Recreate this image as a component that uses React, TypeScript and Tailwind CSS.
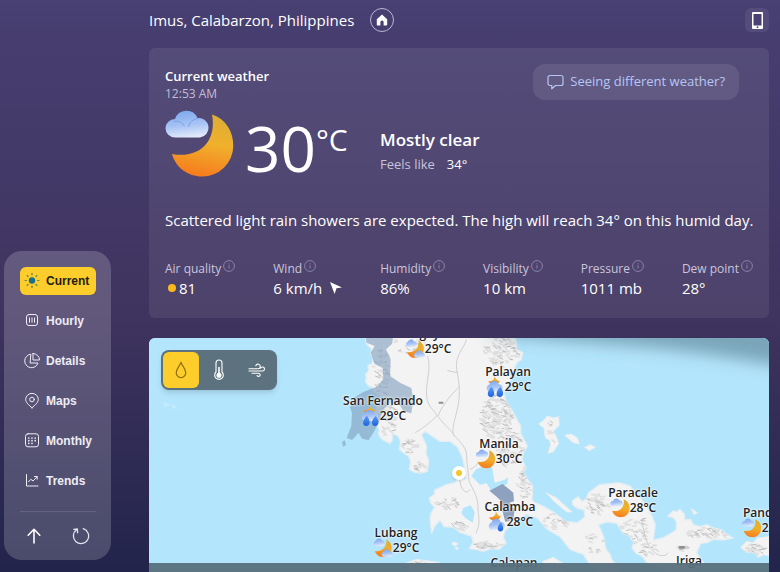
import React, { useId } from "react";

type IconProps = { className?: string };

/* ---------- navigation icons ---------- */

function SunIcon() {
  const rays = [0, 45, 90, 135, 180, 225, 270, 315];
  return (
    <svg viewBox="0 0 16 16" className="size-4" aria-hidden="true">
      <circle cx="8" cy="7.5" r="3.2" fill="#14708c" />
      {rays.map((a) => (
        <path key={a} d="M8 .6v1.2" stroke="#5f7a4c" strokeWidth="1.2" strokeLinecap="round" transform={`rotate(${a} 8 7.5)`} />
      ))}
    </svg>
  );
}

function LineIcon({ children }: { children: React.ReactNode }) {
  return (
    <svg viewBox="0 0 16 16" className="size-4" fill="none" stroke="currentColor" strokeLinecap="round" strokeLinejoin="round" aria-hidden="true">
      {children}
    </svg>
  );
}

const HourlyIcon = () => (
  <LineIcon>
    <rect x="2.5" y="1.5" width="11" height="11" rx="2.5" />
    <path d="M5.5 5v4.2M8 5v4.2M10.5 5v4.2" />
  </LineIcon>
);
const DetailsIcon = () => (
  <LineIcon>
    <path d="M6.5 1.2A6.800 6.800 0 1 0 14 10H6.500z" />
    <path d="M9 .5v6.500h6.500A6.500 6.500 0 0 0 9 .5z" />
  </LineIcon>
);
const MapsIcon = () => (
  <LineIcon>
    <path d="M8 14.8C5 12.2 1.700 9.500 1.700 6.400a6.300 6 0 0 1 12.600 0C14.300 9.500 11 12.200 8 14.800z" />
    <circle cx="8" cy="6.500" r="2.300" />
  </LineIcon>
);
const MonthlyIcon = () => (
  <LineIcon>
    <rect x="1.500" y="0.800" width="13" height="13" rx="2.500" />
    <path d="M8 5h.01M11.200 5h.01M4.800 5h.01M4.800 7.700h.01M8 7.700h.01M11.200 7.700h.01M4.800 10.300h.01M8 10.300h.01" strokeWidth="1.700" />
  </LineIcon>
);
const TrendsIcon = () => (
  <LineIcon>
    <path d="M2.500 1.500v11.500H14" />
    <path d="M4.500 8.800l2.300-2.500 2.200 1.700 4-4.200M10.500 3.500h2.700v2.700" />
  </LineIcon>
);

/* ---------- weather pictograms ---------- */

function Cloud({ fill, transform }: { fill: string; transform?: string }) {
  return (
    <g transform={transform}>
      <path d="M10 28a10 9.500 0 0 1 0-18A11.500 11.500 0 0 1 32 9a10 9.600 0 0 1 2 19z" fill={fill} />
    </g>
  );
}

function WeatherGlyph({ kind, className }: { kind: "moon" | "rain" | "partly" | "drizzle" } & IconProps) {
  const id = useId();
  const moon = `url(#${id}m)`;
  const cloud = `url(#${id}c)`;
  const drop = `url(#${id}d)`;
  return (
    <svg viewBox="0 0 70 70" className={className} aria-hidden="true">
      <defs>
        <linearGradient id={`${id}m`} x1="0.6" y1="0" x2="0.4" y2="1">
          <stop offset="0" stopColor="#dcae35" />
          <stop offset="0.45" stopColor="#f0b02c" />
          <stop offset="1" stopColor="#f67a1c" />
        </linearGradient>
        <linearGradient id={`${id}c`} x1="0.4" y1="0" x2="0.6" y2="1">
          <stop offset="0" stopColor="#7ea9ee" />
          <stop offset="0.55" stopColor="#a9c4f5" />
          <stop offset="1" stopColor="#e4ecfb" />
        </linearGradient>
        <linearGradient id={`${id}d`} x1="0" y1="0" x2="0" y2="1">
          <stop offset="0" stopColor="#5b9df8" />
          <stop offset="1" stopColor="#1b62e0" />
        </linearGradient>
      </defs>
      {kind === "moon" && (
        <>
          <path d="M47 5.500C61 10 68.500 23 68.300 37A31 31 0 0 1 37 67.500C23 67.500 11 59 7 45C35 50 52 32 47 5.500z" fill={moon} />
          <path d="M10 28.500a9.500 9.200 0 0 1 0-18.400A12 12 0 0 1 32.500 9a9.800 9.800 0 0 1 2.500 19.500z" fill={cloud} />
          <path d="M9 12.500a9 9 0 0 1 10.500 5M33 9.500c-5 .5-9 4-9.500 8.500" fill="none" stroke="#6e97e0" strokeWidth="1" opacity="0.7" />
        </>
      )}
      {kind === "partly" && (
        <>
          <path d="M48 4C62 14 68 25 66 38A28 28 0 0 1 34 66C22 66 13 60 7 46C34 48 50 30 48 4z" fill={moon} />
          <Cloud fill={cloud} />
          <Cloud fill={cloud} transform="translate(28 38)" />
        </>
      )}
      {kind === "rain" && (
        <>
          <path d="M33 -6C36 8 28 16 12 15C18 30 46 32 52 14C44 14 36 5 33 -6z" fill={moon} />
          <Cloud fill={cloud} transform="translate(2 12) scale(1.45)" />
          <path d="M24 34c-19 17-16 36-3 36s18-15 3-36z" fill={drop} />
          <path d="M55 34c-19 17-16 36-3 36s18-15 3-36z" fill={drop} />
        </>
      )}
      {kind === "drizzle" && (
        <>
          <path d="M32 -6C34 10 26 20 8 19C16 34 44 34 50 15C42 15 34 6 32 -6z" fill={moon} />
          <Cloud fill={cloud} transform="translate(3 22) scale(1.45)" />
          <path d="M50 36c-16 16-13 32-2 32s15-12 2-32z" fill={drop} />
        </>
      )}
    </svg>
  );
}

function InfoIcon() {
  return (
    <svg viewBox="0 0 12 12" className="size-3 text-[#8a82ab]" fill="none" stroke="currentColor" aria-hidden="true">
      <circle cx="6" cy="6" r="5.400" />
      <path d="M6 5.200v3.400M6 3.300v1" />
    </svg>
  );
}

/* ---------- terrain ---------- */

const LUZON =
  "M75 0L80 24 95 40 92 54 100 66 96 84 84 88 86 104 76 116 80 124 76 136 86 150 98 154 100 166 120 180 112 204 106 226 98 246 108 262 118 282 116 296 128 312 150 322 158 310 156 292 174 300 182 316 178 340 192 352 206 360 212 378 208 400 222 408 240 412 262 406 266 374 258 352 260 330 244 296 256 286 276 300 300 316 330 316 352 332 368 366 376 408 378 430 354 430 344 440 320 446 284 462 284 474 268 486 272 500 284 514 274 530 270 546 275 592 284 570 300 552 312 572 340 574 362 590 394 600 400 618 388 638 406 640 430 646 454 638 478 640 498 620 490 604 494 586 520 560 560 535 590 545 622 580 660 602 690 640 730 655 748 684 764 700 772 712H842L832 690 816 672 810 654 798 640 790 600 776 566 800 558 830 562 850 592 868 600 882 620 876 634 886 650 908 662 922 682 950 688 980 712H1060L1076 694 1090 680 1070 650 1082 622 1102 620 1120 610 1150 612 1180 606 1162 596 1144 582 1120 576 1100 566 1080 572 1060 566 1052 550 1034 552 1034 536 1020 520 1010 528 1000 524 984 540 1002 546 1010 560 1008 582 990 594 968 606 940 612 946 566 936 540 904 490 870 450 836 440 800 444 778 446 760 460 746 470 738 490 726 496 714 482 698 494 698 506 710 516 732 522 735 542 712 560 676 556 640 528 604 508 584 500 576 490 578 450 564 432 550 410 558 396 546 370 550 350 562 330 552 312 542 290 542 270 530 250 516 222 500 200 492 170 500 150 512 130 508 112 522 100 530 80 544 70 548 50 530 40 526 0z";

const ISLANDS = [
  "M596 264L610 254 622 240 640 246 656 242 658 268 640 286 648 300 656 322 640 348 624 352 632 326 628 312 616 306 612 276z",
  "M674 298L694 294 712 306 718 324 700 320z",
  "M734 334L752 326 766 334 748 344z",
  "M618 470L650 486 696 528 680 528 644 498z",
  "M196 682L230 670 300 680 330 712H210z",
  "M608 676L640 664 672 684 668 712H612z",
  "M1202 634L1220 616 1240 620 1252 606 1300 600V664L1270 656 1256 664 1240 650 1216 648z",
  "M1054 518l18 12-10 6z",
  "M338 618l16 4-6 8-12-4zM344 634l12 2-6 6z",
];

// Each ridge: centre x, centre y, half-width, half-height, number of hatch marks.
const RIDGES: [number, number, number, number, number][] = [
  [120, 110, 28, 70, 50],
  [480, 45, 52, 42, 80],
  [465, 240, 52, 70, 160],
  [505, 330, 40, 60, 70],
  [550, 440, 22, 48, 50],
  [140, 250, 28, 55, 45],
  [205, 330, 22, 22, 25],
  [236, 392, 16, 14, 16],
  [320, 500, 38, 18, 26],
  [350, 570, 34, 14, 20],
  [440, 628, 42, 10, 36],
  [640, 560, 34, 28, 24],
  [760, 620, 28, 36, 18],
  [770, 500, 34, 34, 40],
  [880, 580, 44, 40, 50],
  [920, 640, 30, 16, 20],
  [1100, 590, 60, 16, 50],
  [1024, 634, 14, 8, 12],
  [1240, 640, 34, 14, 36],
  [630, 290, 14, 36, 8],
  [230, 682, 26, 6, 14],
  [200, 20, 60, 30, 20],
];

function buildHatching() {
  let seed = 41;
  const next = () => {
    seed = (seed * 16807) % 2147483647;
    return seed / 2147483647;
  };
  const dark: string[] = [];
  const light: string[] = [];
  RIDGES.forEach(([cx, cy, rx, ry, count]) => {
    for (let i = 0; i < count; i++) {
      const angle = next() * Math.PI * 2;
      const radius = Math.sqrt(next());
      const x = cx + Math.cos(angle) * rx * radius;
      const y = cy + Math.sin(angle) * ry * radius;
      const dx = 4 + next() * 8;
      const dy = (next() - 0.3) * 12;
      const mark = `M${x.toFixed(1)} ${y.toFixed(1)}l${dx.toFixed(1)} ${dy.toFixed(1)}`;
      (i % 4 === 0 ? dark : light).push(mark);
    }
  });
  return { dark: dark.join(""), light: light.join("") };
}

const HATCHING = buildHatching();

function Terrain() {
  return (
    <svg viewBox="0 0 620 234" preserveAspectRatio="xMinYMin slice" className="size-full" role="img" aria-label="Map of Luzon">
      <defs>
        <filter id="soften" x="-20%" y="-80%" width="140%" height="260%">
          <feGaussianBlur stdDeviation="8" />
        </filter>
        <clipPath id="land">
          <path d={LUZON} />
          <path d={ISLANDS.join("")} />
        </clipPath>
      </defs>
      <rect width="620" height="234" fill="#b3e5fc" />
      <g transform="translate(191 -2) scale(0.33333)">
        <path d={LUZON} fill="#f3f3f3" stroke="#e3eef2" strokeWidth="4" strokeLinejoin="round" />
        <path d={ISLANDS.join("")} fill="#f3f3f3" stroke="#e3eef2" strokeWidth="3" strokeLinejoin="round" />
        <g clipPath="url(#land)" fill="none" strokeLinecap="round">
          <path d={HATCHING.light} stroke="#dfdfdf" strokeWidth="5" />
          <path d={HATCHING.dark} stroke="#bdbdbd" strokeWidth="3" />
        </g>
        <path d="M394 420L408 400 440 388 456 394 464 440 492 432 504 424 502 444 476 452 452 462 440 442 420 446zM370 516L392 508 404 528 398 560 376 546 364 532z" fill="#b3e5fc" />
        <path d="M76 0H160L156 24 138 40 152 70 150 120 180 140 214 156 220 190 214 232 190 226 176 200 150 200 130 220 118 256 100 290 86 312 66 308 56 290 36 312 20 306 34 270 36 230 30 214 44 184 70 168 110 152 130 130 128 96 104 84 92 50 104 30 80 20zM6 318l8-6 4 14-8 6z" fill="#7f9dbd" opacity="0.6" />
        <path d="M448 464L488 444 520 470 522 496 508 500 524 520 520 552 496 558 486 520 482 494 470 482z" fill="#6c86ac" opacity="0.75" />
        <g fill="none" stroke="#cfcfd4" strokeWidth="3">
          <path d="M262 60c14 34-6 80-2 120 2 30 20 40 32 60 20 26 40 40 52 60 16 18 36 34 36 60s6 50 6 66c0 20 30 50 28 90 0 30 10 40-6 76" />
          <path d="M380 10c-10 30-36 50-30 90 6 30 12 70 4 110-6 34-22 70-12 90M322 104l32 6M360 150c-20 20-50 50-66 90M290 240c-20 20-40 36-64 50" />
          <path d="M390 400c10-4 20-10 24-20M360 430c0 30 20 50 30 30M740 490c20 10 30 0 50 10M905 560c10 30 10 60 30 80 14 20 40 26 50 10" />
        </g>
        <path d="M296 197h14v6h-14zM1016 630h18v8h-18z" fill="#8f8f8f" />
      </g>
      <path d="M340 -30H670V38C610 22 540 12 460 6C420 3 380 0 340 -4z" fill="#436577" fillOpacity="0.5" filter="url(#soften)" />
      <path d="M15 64l8 3-6 1-1 5zM24 66l5 5-6-1z" fill="#c6eafa" />
    </svg>
  );
}

/* ---------- data ---------- */

const NAV = [
  { label: "Current", icon: SunIcon },
  { label: "Hourly", icon: HourlyIcon },
  { label: "Details", icon: DetailsIcon },
  { label: "Maps", icon: MapsIcon },
  { label: "Monthly", icon: MonthlyIcon },
  { label: "Trends", icon: TrendsIcon },
];

const METRICS = [
  { label: "Air quality", value: "81" },
  { label: "Wind", value: "6 km/h" },
  { label: "Humidity", value: "86%" },
  { label: "Visibility", value: "10 km" },
  { label: "Pressure", value: "1011 mb" },
  { label: "Dew point", value: "28°" },
];

const PINS = [
  { name: "Lingayen", temp: "29°C", kind: "partly", at: "left-[279px] top-[-12px]" },
  { name: "Palayan", temp: "29°C", kind: "rain", at: "left-[359px] top-[26px]" },
  { name: "San Fernando", temp: "29°C", kind: "rain", at: "left-[234px] top-[55px]" },
  { name: "Manila", temp: "30°C", kind: "moon", at: "left-[350px] top-[98px]" },
  { name: "Calamba", temp: "28°C", kind: "drizzle", at: "left-[361px] top-[161px]" },
  { name: "Lubang", temp: "29°C", kind: "partly", at: "left-[247px] top-[187px]" },
  { name: "Paracale", temp: "28°C", kind: "moon", at: "left-[484px] top-[147px]" },
  { name: "Pandan", temp: "28°C", kind: "moon", at: "left-[616px] top-[167px]" },
  { name: "Calapan", temp: null, kind: "moon", at: "left-[365px] top-[217px]" },
  { name: "Iriga", temp: null, kind: "moon", at: "left-[540px] top-[215px]" },
] as const;

/* ---------- sections ---------- */

function SideNav() {
  return (
    <aside className="mb-3 ml-1 w-[107px] shrink-0 self-end rounded-[18px] bg-white/18 px-4 pt-4 pb-[15px] font-['Liberation_Sans',Arial,sans-serif]">
      <nav aria-label="Sections" className="flex flex-col gap-3">
        {NAV.map(({ label, icon: Icon }, i) => (
          <a
            key={label}
            href={`#${label.toLowerCase()}`}
            aria-current={i === 0 ? "page" : undefined}
            className={
              i === 0
                ? "flex h-7 w-[76px] items-center gap-1.5 rounded-md bg-[#fdce2b] pl-1 text-xs font-bold text-[#231c10]"
                : "flex h-7 w-[76px] items-center gap-1.5 rounded-md pl-1 text-xs font-bold text-[#eeecf5]"
            }
          >
            <Icon />
            {label}
          </a>
        ))}
      </nav>
      <div className="mt-4 flex w-[76px] justify-between border-t border-white/12 px-1.5 pt-[15px]">
        <button type="button" aria-label="Back to top" className="text-white">
          <svg viewBox="0 0 16 16" className="size-4" fill="none" stroke="currentColor" strokeWidth="1.6" strokeLinecap="round" strokeLinejoin="round">
            <path d="M8 15V1.500M2.200 7.200L8 1.300l5.800 5.900" />
          </svg>
        </button>
        <button type="button" aria-label="Refresh" className="text-[#e4e2ee]">
          <svg viewBox="0 0 18 18" className="size-[18px]" fill="none" stroke="currentColor" strokeWidth="1.300" strokeLinecap="round" strokeLinejoin="round">
            <path d="M11.200 1.700a7.600 7.600 0 1 1-6.600 1.100" />
            <path d="M1.800 2.400l3.600-.4.200 3.800" />
          </svg>
        </button>
      </div>
    </aside>
  );
}

function CurrentCard() {
  return (
    <section aria-labelledby="current-title" className="rounded-md bg-white/7 px-4 pt-4 pb-5">
      <div className="flex items-start justify-between">
        <div className="pt-1">
          <h2 id="current-title" className="text-[13px] leading-4 font-semibold">Current weather</h2>
          <p className="text-xs leading-5 text-[#c3bdd6]">12:53 AM</p>
        </div>
        <button type="button" className="mr-3.5 flex h-9 items-center gap-1.5 rounded-xl bg-white/9 px-3.5 text-[13px] text-[#b5c6f5]">
          <svg viewBox="0 0 17 16" className="h-4 w-[17px]" fill="none" stroke="currentColor" strokeWidth="1.200" strokeLinejoin="round" aria-hidden="true">
            <path d="M3 1.500h11a2 2 0 0 1 2 2v6a2 2 0 0 1-2 2H8.500L4.800 14.800v-3.300H3a2 2 0 0 1-2-2v-6a2 2 0 0 1 2-2z" />
          </svg>
          Seeing different weather?
        </button>
      </div>

      <div className="flex h-20 items-center">
        <WeatherGlyph kind="moon" className="size-[70px]" />
        <p className="ml-2.5 flex w-[135px] items-start pt-2 leading-none">
          <span className="text-[62px] leading-[80px]">30</span>
          <span className="pt-2 text-[30px] leading-[48px]">°C</span>
        </p>
        <div className="pt-4">
          <p className="text-[17px] leading-6 font-semibold">Mostly clear</p>
          <p className="flex gap-3 text-[13px] leading-6">
            <span className="text-[#c9c3da]">Feels like</span>
            <span>34°</span>
          </p>
        </div>
      </div>

      <p className="mt-6 text-[15px] leading-6 whitespace-nowrap">
        Scattered light rain showers are expected. The high will reach 34° on this humid day.
      </p>

      <dl className="mt-7 flex justify-between">
        {METRICS.map(({ label, value }) => (
          <div key={label}>
            <dt className="flex items-start gap-0.5 text-xs leading-[18px] text-[#cbc5dc]">
              {label}
              <InfoIcon />
            </dt>
            <dd className="flex items-center text-[15px] leading-5">
              {label === "Air quality" && <span className="mx-[3px] size-2 rounded-full bg-[#fbb81c]" />}
              {value}
              {label === "Wind" && (
                <svg viewBox="0 0 12 12" className="ml-2 size-3" fill="currentColor" aria-hidden="true">
                  <path d="M0 0l12 5.500-5.500.8L4.600 12z" />
                </svg>
              )}
            </dd>
          </div>
        ))}
      </dl>
    </section>
  );
}

function MapCard() {
  return (
    <section aria-label="Weather map" className="relative mt-5 min-h-0 flex-1 overflow-hidden rounded-t-md bg-[#b3e5fc]">
      <Terrain />
      {PINS.map(({ name, temp, kind, at }) => (
        <div key={name} className={`absolute flex -translate-x-1/2 flex-col items-center text-xs font-semibold text-[#222] [text-shadow:0_0_2px_#fff,0_0_3px_#fff] ${at}`}>
          <span className="leading-[15px] whitespace-nowrap">{name}</span>
          {temp && (
            <span className="flex h-4 items-center leading-4">
              <WeatherGlyph kind={kind} className="size-5 overflow-visible" />
              {temp}
            </span>
          )}
        </div>
      ))}
      <span className="absolute top-[128px] left-[303px] size-[14px] rounded-full border-4 border-white bg-[#f5c52c] shadow" />

      <div role="group" aria-label="Map layer" className="absolute top-3 left-3 flex gap-0.5 rounded-lg bg-[#5c727e] p-0.5 text-white shadow-md">
        <button type="button" aria-label="Precipitation" aria-pressed="true" className="flex size-9 items-center justify-center rounded-md bg-[#fdce2b] text-[#8f6c0c]">
          <svg viewBox="0 0 12 18" className="h-[18px] w-3" fill="none" stroke="currentColor" strokeWidth="1.200">
            <path d="M6 1.500C4 6 1.200 8.500 1.200 11.800a4.800 4.800 0 0 0 9.600 0C10.800 8.500 8 6 6 1.500z" />
          </svg>
        </button>
        <button type="button" aria-label="Temperature" aria-pressed="false" className="flex size-9 items-center justify-center">
          <svg viewBox="0 0 10 22" className="h-[22px] w-2.5" fill="none" stroke="currentColor" strokeWidth="1.100">
            <path d="M2 13V4a3 3 0 0 1 6 0v9a4.300 4.300 0 1 1-6 0z" />
            <circle cx="5" cy="16.300" r="2" fill="currentColor" />
            <path d="M5 8v8" strokeWidth="1.600" />
          </svg>
        </button>
        <button type="button" aria-label="Wind" aria-pressed="false" className="flex size-9 items-center justify-center">
          <svg viewBox="0 0 18 14" className="h-3.5 w-[18px]" fill="none" stroke="currentColor" strokeWidth="1.100" strokeLinecap="round">
            <path d="M1 5.800h9a2.300 2.300 0 1 0-2.200-3.100M1 8h13.500a2 2 0 1 0-1.900-2.700M4 10.200h6.500a1.600 1.600 0 1 1-1.400 2.300" />
          </svg>
        </button>
      </div>

      <div className="absolute inset-x-0 bottom-0 h-[9px] bg-[#57707c]/95" />
    </section>
  );
}

export default function App() {
  return (
    <div className="flex h-screen overflow-hidden bg-linear-to-b from-[#483f72] via-[#3f345f] via-55% to-[#22244b] font-['Open_Sans','Noto_Sans',sans-serif] text-white">
      <SideNav />
      <main className="mr-[11px] ml-[38px] flex min-w-0 flex-1 flex-col">
        <header className="mb-2 flex h-10 items-center">
          <h1 className="text-[15px]">Imus, Calabarzon, Philippines</h1>
          <button type="button" aria-label="Set as home location" className="ml-4 flex size-6 items-center justify-center rounded-full border border-[#bdb7d6]">
            <svg viewBox="0 0 12 12" className="size-3" fill="currentColor" aria-hidden="true">
              <path d="M6 .4l5.200 4.800v5.600a.8.8 0 0 1-.8.8H7.600V8a1.600 1.600 0 0 0-3.200 0v3.600H1.600a.8.8 0 0 1-.8-.8V5.200z" />
            </svg>
          </button>
          <button type="button" aria-label="Get the mobile app" className="ml-auto flex size-6 items-center justify-center rounded-md bg-white/7">
            <svg viewBox="0 0 11 17" className="h-[17px] w-[11px]" aria-hidden="true">
              <rect width="11" height="17" rx="1" fill="#fff" />
              <rect x="1.500" y="2" width="8" height="11.500" fill="#4a4074" />
              <circle cx="5.500" cy="15.200" r="0.900" fill="#4a4074" />
            </svg>
          </button>
        </header>
        <CurrentCard />
        <MapCard />
      </main>
    </div>
  );
}
